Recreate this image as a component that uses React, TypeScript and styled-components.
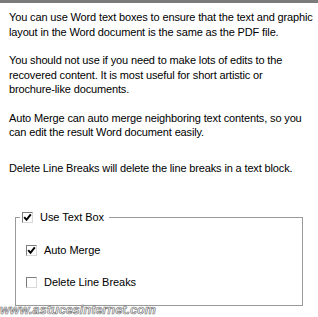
import React from "react";
import styled, { createGlobalStyle } from "styled-components";

const Global = createGlobalStyle`
  html, body { margin: 0; padding: 0; background: #ffffff; }
  body { width: 318px; height: 317px; overflow: hidden; }
`;

const Page = styled.div`
  width: 318px;
  height: 317px;
  background: #ffffff;
  font-family: "Liberation Sans", Arial, sans-serif;
  font-size: 11px;
  color: #000;
  display: flex;
  flex-direction: column;
  position: relative;
  overflow: hidden;
`;

const TopBar = styled.div`
  height: 3px;
  background: #7b7b7b;
  flex: none;
`;

const Texts = styled.div`
  padding: 7px 0 0 9px;
  display: flex;
  flex-direction: column;
`;

const Para = styled.p<{ $gap: number }>`
  margin: 0 0 ${(p) => p.$gap}px 0;
  line-height: 14.5px;
  letter-spacing: -0.14px;
  white-space: nowrap;
`;

const Group = styled.fieldset`
  margin: 35px 0 0 15px;
  width: 288px;
  box-sizing: border-box;
  border: 1px solid #9a9a9a;
  padding: 0 0 16px 10px;
  display: flex;
  flex-direction: column;
  gap: 18px;
`;

const Legend = styled.legend`
  padding: 0 5px 0 2px;
  margin-left: -6px;
`;

const Row = styled.label`
  display: flex;
  align-items: center;
  gap: 7px;
  height: 14px;
  letter-spacing: -0.05px;
`;

const Box = styled.span`
  width: 11px;
  height: 11px;
  box-sizing: border-box;
  border-top: 1px solid #7c7c7c;
  border-left: 1px solid #7c7c7c;
  border-right: 1px solid #d8d8d8;
  border-bottom: 1px solid #d8d8d8;
  background: #fff;
  display: flex;
  align-items: center;
  justify-content: center;
  flex: none;
`;

const First = styled.div`
  margin-top: 19px;
`;

const Watermark = styled.div`
  position: absolute;
  left: 0;
  bottom: 0;
  font-family: "Liberation Sans", Arial, sans-serif;
  font-weight: bold;
  font-style: italic;
  font-size: 12.5px;
  line-height: 13px;
  letter-spacing: 0.1px;
  color: #f4f4f4;
  -webkit-text-stroke: 0.6px #6e6e6e;
  white-space: nowrap;
`;

const Check = () => (
  <svg width="9" height="9" viewBox="0 0 9 9">
    <path d="M1.2 4.2 L3.5 6.8 L7.8 1.3" stroke="#000" strokeWidth="2" fill="none" />
  </svg>
);

const CheckBox = ({ checked }: { checked: boolean }) => (
  <Box>{checked && <Check />}</Box>
);

export default function App() {
  return (
    <Page>
      <Global />
      <TopBar />
      <Texts>
        <Para $gap={14}>
          You can use Word text boxes to ensure that the text and graphic
          <br />
          layout in the Word document is the same as the PDF file.
        </Para>
        <Para $gap={14}>
          You should not use if you need to make lots of edits to the
          <br />
          recovered content. It is most useful for short artistic or
          <br />
          brochure-like documents.
        </Para>
        <Para $gap={21}>
          Auto Merge can auto merge neighboring text contents, so you
          <br />
          can edit the result Word document easily.
        </Para>
        <Para $gap={0}>Delete Line Breaks will delete the line breaks in a text block.</Para>
      </Texts>
      <Group>
        <Legend>
          <Row>
            <CheckBox checked />
            Use Text Box
          </Row>
        </Legend>
        <First>
          <Row>
            <CheckBox checked />
            Auto Merge
          </Row>
        </First>
        <Row>
          <CheckBox checked={false} />
          Delete Line Breaks
        </Row>
      </Group>
      <Watermark>www.astucesinternet.com</Watermark>
    </Page>
  );
}
